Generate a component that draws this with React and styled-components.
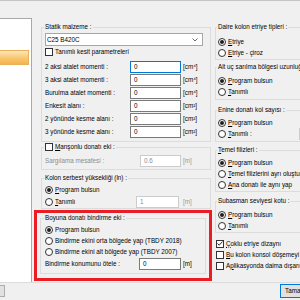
import React from "react";
import styled, { createGlobalStyle } from "styled-components";

const GlobalStyle = createGlobalStyle`
  html, body { margin: 0; padding: 0; }
  body { background: #f0f0f0; }
  * { box-sizing: border-box; }
`;

const Window = styled.div`
  width: 300px;
  height: 300px;
  overflow: hidden;
  background: #f0f0f0;
  border-top: 1px solid #c4c4c4;
  font-family: "Liberation Sans", Arial, sans-serif;
  font-size: 6.3px;
  line-height: 8px;
  color: #000;
  display: flex;
  flex-direction: column;
`;

const Body = styled.div`
  display: flex;
  height: 281px;
  padding-top: 17px;
`;

const TreePanel = styled.div`
  width: 32px;
  flex: none;
  background: #fff;
  border: 1px solid #a9a9a9;
  border-left: none;
  border-bottom: none;
  padding-top: 31px;
`;

const Highlight = styled.div`
  width: 29px;
  height: 15px;
  background: linear-gradient(#fde6b8, #f9c66f 55%, #f5b44a);
  border: 1px solid #e8b15a;
  border-left: none;
`;

const Column = styled.div`
  display: flex;
  flex-direction: column;
  flex: none;
  width: ${(p) => p.$w}px;
  margin-left: ${(p) => p.$ml}px;
`;

const Group = styled.fieldset`
  margin: ${(p) => p.$mt || 0}px 0 0;
  padding: ${(p) => p.$pad};
  border: 1px solid #dcdcdc;
  min-width: 0;
`;

const Legend = styled.legend`
  padding: 0 1px;
  margin-left: -1px;
  height: 8px;
  line-height: 8px;
  white-space: nowrap;
  display: flex;
  align-items: center;
  gap: 2px;
`;

const Row = styled.div`
  display: flex;
  align-items: center;
  height: ${(p) => p.$h || 11}px;
  margin-top: ${(p) => p.$mt || 0}px;
  white-space: nowrap;
  gap: ${(p) => p.$gap || 0}px;
`;

const Label = styled.span`
  flex: ${(p) => (p.$w ? "none" : 1)};
  width: ${(p) => (p.$w ? `${p.$w}px` : "auto")};
  color: ${(p) => (p.$off ? "#8c8c8c" : "#000")};
  overflow: hidden;
`;

const Field = styled.div`
  flex: none;
  width: ${(p) => p.$w}px;
  height: 12px;
  padding-left: 3px;
  display: flex;
  align-items: center;
  background: #fff;
  border: 1px solid
    ${(p) => (p.$focus ? "#0078d7" : p.$off ? "#cccccc" : "#7a7a7a")};
  color: ${(p) => (p.$off ? "#8c8c8c" : "#000")};
`;

const Unit = styled.span`
  flex: none;
  width: ${(p) => p.$w || 24}px;
  margin-left: 2px;
  color: ${(p) => (p.$off ? "#9a9a9a" : "#000")};
`;

const Select = styled.div`
  width: 158px;
  height: 13px;
  padding: 0 4px 0 1px;
  display: flex;
  align-items: center;
  justify-content: space-between;
  background: #fff;
  border: 1px solid #a6a6a6;
`;

const RadioDot = styled.span`
  position: relative;
  flex: none;
  width: 8px;
  height: 8px;
  border: 1px solid #333;
  border-radius: 50%;
  background: #fff;
  &::after {
    content: "";
    display: ${(p) => (p.$on ? "block" : "none")};
    position: absolute;
    inset: 1px;
    border-radius: 50%;
    background: #1f1f1f;
  }
`;

const Box = styled.span`
  flex: none;
  width: 8px;
  height: 8px;
  border: 1px solid #333;
  background: #fff;
  display: flex;
  align-items: center;
  justify-content: center;
`;

const RedFrame = styled.div`
  margin: 1px -1px 0 -7px;
  padding: 1px 3px 4px 3px;
  border: 3px solid #ec1c24;
`;

const CheckList = styled.div`
  margin: 5px 0 0 1px;
  display: flex;
  flex-direction: column;
`;

const Footer = styled.div`
  height: 18px;
  border-top: 1px solid #dcdcdc;
  display: flex;
  align-items: flex-start;
  padding-top: 1px;
`;

const Button = styled.div`
  flex: none;
  width: ${(p) => p.$w}px;
  height: ${(p) => p.$h}px;
  margin: ${(p) => p.$m};
  padding-left: 4px;
  display: flex;
  align-items: center;
  background: #e1e1e1;
  border: 1px solid ${(p) => (p.$primary ? "#0078d7" : "#adadad")};
`;

const Spacer = styled.div`
  flex: 1;
`;

const Radio = ({ on, children, w, field, h }) => (
  <Row $h={h} $gap={2}>
    <RadioDot $on={on} />
    <Label $w={w}>{children}</Label>
    {field}
  </Row>
);

const Check = ({ on }) => (
  <Box>
    {on && (
      <svg width="6" height="5" viewBox="0 0 6 5">
        <polyline points="0.5,2.5 2.2,4.2 5.5,0.6" fill="none" stroke="#222" strokeWidth="1" />
      </svg>
    )}
  </Box>
);

const props = [
  ["2 aksi atalet momenti :", "[cm⁴]", true],
  ["3 aksi atalet momenti :", "[cm⁴]"],
  ["Burulma atalet momenti :", "[cm⁴]"],
  ["Enkesit alanı :", "[cm²]"],
  ["2 yönünde kesme alanı :", "[cm²]"],
  ["3 yönünde kesme alanı :", "[cm²]"],
];

export default function App() {
  return (
    <>
      <GlobalStyle />
      <Window>
        <Body>
          <TreePanel>
            <Highlight />
          </TreePanel>

          <Column $w={170} $ml={9}>
            <Group $mt={5} $pad="2px 3px 3px 3px">
              <Legend>Statik malzeme :</Legend>
              <Select>
                <span>C25 B420C</span>
                <svg width="6" height="4" viewBox="0 0 6 4">
                  <polyline points="0.5,0.5 3,3 5.5,0.5" fill="none" stroke="#444" strokeWidth="0.8" />
                </svg>
              </Select>
              <Row $h={9} $mt={1} $gap={2}>
                <Check />
                <span>Tanımlı kesit parametreleri</span>
              </Row>
              {props.map(([label, unit, focus], i) => (
                <Row key={label} $h={13} $mt={i === 0 ? 4 : 0}>
                  <Label>{label}</Label>
                  <Field $w={51} $focus={focus}>0</Field>
                  <Unit>{unit}</Unit>
                </Row>
              ))}
            </Group>

            <Group $mt={1} $pad="4px 3px 2px 3px">
              <Legend>
                <Check />
                <span>
                  <u>M</u>anşonlu donatı eki :
                </span>
              </Legend>
              <Row $h={12}>
                <Label $off>Sargılama mesafesi :</Label>
                <Field $w={41} $off>0.6</Field>
                <Unit $off>[m]</Unit>
              </Row>
            </Group>

            <Group $mt={4} $pad="3px 3px 0 3px">
              <Legend>Kolon serbest yüksekliği (ln) :</Legend>
              <Radio on h={10}>
                <u>P</u>rogram bulsun
              </Radio>
              <Row $h={12} $mt={1} $gap={2}>
                <RadioDot />
                <Label>
                  <u>T</u>anımlı
                </Label>
                <Field $w={43} $off>1</Field>
                <Unit $off>[m]</Unit>
              </Row>
            </Group>

            <RedFrame>
              <Group $pad="2px 0 3px 4px">
                <Legend>Boyuna donatı bindirme eki :</Legend>
                <Radio on>Program bulsun</Radio>
                <Radio>Bindirme ekini orta bölgede yap (TBDY 2018)</Radio>
                <Radio>Bindirme ekini alt bölgede yap (TBDY 2007)</Radio>
                <Row $h={12} $mt={1}>
                  <Label>Bindirme konumunu ötele :</Label>
                  <Field $w={42}>0</Field>
                  <Unit $w={22}>[m]</Unit>
                </Row>
              </Group>
            </RedFrame>
          </Column>

          <Column $w={130} $ml={4}>
            <Group $mt={5} $pad="5px 0 1px 2px">
              <Legend>Daire kolon etriye tipleri :</Legend>
              <Radio on>
                <u>E</u>triye
              </Radio>
              <Radio>
                <u>E</u>triye - çiroz
              </Radio>
            </Group>

            <Group $mt={3} $pad="4px 0 1px 2px">
              <Legend>Alt uç sarılma bölgesi uzunluğu :</Legend>
              <Radio on>
                <u>P</u>rogram bulsun
              </Radio>
              <Radio h={12} w={70} field={<Field $w={30} $off />}>
                <u>T</u>anımlı
              </Radio>
            </Group>

            <Group $mt={6} $pad="3px 0 1px 2px">
              <Legend>Enine donatı kol sayısı :</Legend>
              <Radio on>
                <u>P</u>rogram bulsun
              </Radio>
              <Radio h={12} w={69} field={<Field $w={30} $off />}>
                <u>T</u>anımlı :
              </Radio>
            </Group>

            <Group $mt={4} $pad="3px 0 1px 2px">
              <Legend>
                <span>
                  <u>T</u>emel filizleri :
                </span>
              </Legend>
              <Radio on>
                <u>P</u>rogram bulsun
              </Radio>
              <Radio>
                <u>T</u>emel filizlerini ayrı oluştur
              </Radio>
              <Radio>
                <u>A</u>na donatı ile aynı yap
              </Radio>
            </Group>

            <Group $mt={5} $pad="4px 0 0 2px">
              <Legend>Subasman seviyesi kotu :</Legend>
              <Radio on>
                <u>P</u>rogram bulsun
              </Radio>
              <Radio h={12} w={70} field={<Field $w={30} $off />}>
                <u>T</u>anımlı
              </Radio>
            </Group>

            <CheckList>
              <Row $gap={2}>
                <Check on />
                <span>
                  <u>Ç</u>oklu etriye dizaynı
                </span>
              </Row>
              <Row $gap={2}>
                <Check />
                <span>
                  <u>B</u>u kolon konsol döşemeyi taşıyor
                </span>
              </Row>
              <Row $gap={2}>
                <Check />
                <span>
                  A<u>p</u>likasyonda daima dışarıda
                </span>
              </Row>
            </CheckList>
          </Column>
        </Body>

        <Footer>
          <Button $w={6} $h={12} $m="1px 0 0 -1px" />
          <Spacer />
          <Button $w={60} $h={14} $m="0 -40px 0 0" $primary>
            Tamam
          </Button>
        </Footer>
      </Window>
    </>
  );
}
